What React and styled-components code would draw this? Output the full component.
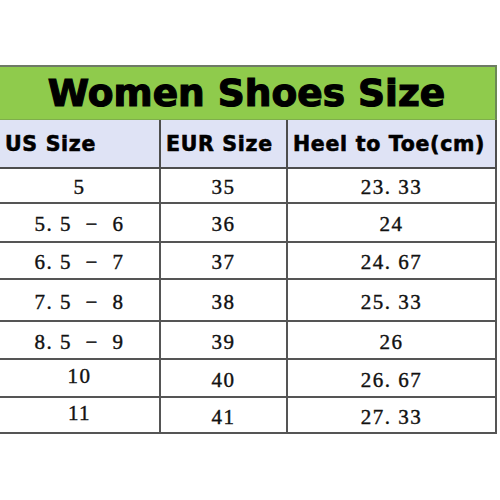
import React from 'react'
import styled, { createGlobalStyle } from 'styled-components'

const rows = [
  { us: '5', eur: '35', cm: '23. 33', h: 35 },
  { us: '5. 5  \u2212  6', eur: '36', cm: '24', h: 39 },
  { us: '6. 5  \u2212  7', eur: '37', cm: '24. 67', h: 37 },
  { us: '7. 5  \u2212  8', eur: '38', cm: '25. 33', h: 42 },
  { us: '8. 5  \u2212  9', eur: '39', cm: '26', h: 38 },
  { us: '10', eur: '40', cm: '26. 67', h: 38, lift: true },
  { us: '11', eur: '41', cm: '27. 33', h: 36, lift: true },
]

function App() {
  return (
    <>
      <GlobalStyle />
      <Page>
        <Chart>
          <Title>Women Shoes Size</Title>
          <Grid rows={rows.map(r => r.h + 'px').join(' ')}>
            <HeadCell>US Size</HeadCell>
            <HeadCell>EUR Size</HeadCell>
            <HeadCell>Heel to Toe(cm)</HeadCell>
            {rows.map((r, i) => (
              <React.Fragment key={i}>
                <Cell lift={r.lift}>{r.us}</Cell>
                <Cell>{r.eur}</Cell>
                <Cell>{r.cm}</Cell>
              </React.Fragment>
            ))}
          </Grid>
        </Chart>
      </Page>
    </>
  )
}

export default App

const GlobalStyle = createGlobalStyle`
  body {
    margin: 0;
    background: #fff;
  }
`

const Page = styled.div`
  width: 500px;
  height: 500px;
  padding-top: 65px;
  box-sizing: border-box;
  background: #fff;
`

const Chart = styled.div`
  width: 497px;
`

const Title = styled.div`
  height: 55px;
  box-sizing: border-box;
  border-top: 2px solid #6e7a66;
  border-bottom: 1px solid #7fae4c;
  border-right: 2px solid #6b8a55;
  background: #8fcb4c;
  display: flex;
  align-items: center;
  justify-content: center;
  padding-right: 2px;
  font-family: "DejaVu Sans", sans-serif;
  font-weight: bold;
  font-size: 37.5px;
  color: #000;
  -webkit-text-stroke: 1.2px #000;
`

const Grid = styled.div`
  display: grid;
  grid-template-columns: 161px 127px 209px;
  grid-template-rows: 49px ${p => p.rows};
`

const HeadCell = styled.div`
  box-sizing: border-box;
  background: #dfe3f5;
  border-bottom: 2px solid #4d4d4d;
  border-right: 2px solid #4d4d4d;
  display: flex;
  align-items: center;
  padding-left: 5px;
  font-family: "DejaVu Sans", sans-serif;
  font-weight: bold;
  font-size: 20.5px;
  letter-spacing: 0.7px;
  color: #000;
  -webkit-text-stroke: 0.6px #000;
  white-space: nowrap;
`

const Cell = styled.div`
  box-sizing: border-box;
  background: #fff;
  border-bottom: 2px solid #555;
  border-right: 2px solid #555;
  display: flex;
  align-items: center;
  justify-content: center;
  padding-top: ${p => (p.lift ? '0' : '4px')};
  padding-bottom: ${p => (p.lift ? '3px' : '0')};
  font-family: "Liberation Serif", serif;
  font-size: 21px;
  letter-spacing: 1.5px;
  color: #111;
  -webkit-text-stroke: 0.4px #111;
  white-space: pre;
`
